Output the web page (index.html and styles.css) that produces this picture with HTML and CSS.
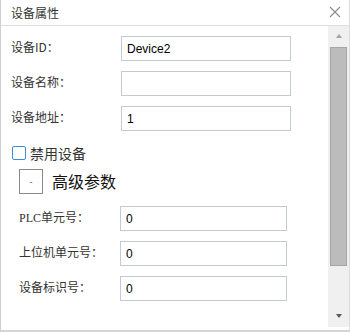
FILE: index.html
```html
<!DOCTYPE html>
<html lang="zh-CN">
<head>
	<meta charset="UTF-8">
	<title>设备属性</title>
	<link rel="stylesheet" href="styles.css">
</head>
<body>
	<div class="panel">
		<div class="title">
			<span class="title-text">设备属性</span>
			<svg class="close" width="12" height="12" viewBox="0 0 12 12">
				<path d="M1 1 L11 11 M11 1 L1 11" stroke="#8a8a8a" stroke-width="1.1" fill="none"/>
			</svg>
		</div>
		<div class="body">
			<div class="content">
				<div class="row">
					<label class="lbl">设备ID：</label>
					<input class="txt" type="text" value="Device2">
				</div>
				<div class="row">
					<label class="lbl">设备名称：</label>
					<input class="txt" type="text" value="">
				</div>
				<div class="row">
					<label class="lbl">设备地址：</label>
					<input class="txt" type="text" value="1">
				</div>
				<div class="check-row">
					<input class="chk" type="checkbox">
					<span class="chk-text">禁用设备</span>
				</div>
				<div class="adv-row">
					<button class="toggle">-</button>
					<span class="adv-text">高级参数</span>
				</div>
				<div class="sub">
					<div class="row">
						<label class="lbl sub-lbl"><span class="serif">PLC</span>单元号：</label>
						<input class="txt sub-txt" type="text" value="0">
					</div>
					<div class="row">
						<label class="lbl sub-lbl">上位机单元号：</label>
						<input class="txt sub-txt" type="text" value="0">
					</div>
					<div class="row">
						<label class="lbl sub-lbl">设备标识号：</label>
						<input class="txt sub-txt" type="text" value="0">
					</div>
				</div>
			</div>
			<div class="scroll">
				<div class="arrow-up"></div>
				<div class="thumb"></div>
				<div class="arrow-down"></div>
			</div>
		</div>
	</div>
</body>
</html>
```

FILE: styles.css
```css
*{
	padding:0;
	margin:0;
	box-sizing: border-box;
}
body{
	background: #fff;
	font-family: "Noto Sans CJK SC", "Liberation Sans", sans-serif;
	font-size: 12px;
	color: #333;
}
.panel{
	width: 350px;
	height: 332px;
	border-left: 1px solid #cfcfcf;
	border-right: 1px solid #dcdcdc;
	border-bottom: 2px solid #d4d4d4;
	display: flex;
	flex-direction: column;
}
.title{
	height: 26px;
	border-bottom: 1px solid #dedede;
	display: flex;
	align-items: center;
	justify-content: space-between;
	padding: 0 8px 0 10px;
}
.title-text{
	font-size: 12px;
	color: #333;
	line-height: 1;
}
.close{
	display: block;
	margin-top: -1px;
}
.body{
	flex: 1;
	display: flex;
	padding-bottom: 3px;
}
.content{
	flex: 1;
	padding: 10px 0 0 10px;
}
.row{
	display: flex;
	align-items: center;
	height: 25px;
	margin-bottom: 10px;
}
.lbl{
	width: 110px;
	font-size: 12px;
	color: #333;
	line-height: 1;
	margin-top: -3px;
}
.txt{
	width: 170px;
	height: 25px;
	border: 1px solid #c3cad6;
	padding: 0 5px;
	font-family: "Liberation Sans", sans-serif;
	font-size: 12px;
	color: #000;
	outline: none;
	background: #fff;
}
.check-row{
	display: flex;
	align-items: center;
	height: 24px;
	margin-top: 0;
}
.chk{
	appearance: none;
	-webkit-appearance: none;
	width: 14px;
	height: 14px;
	border: 1px solid #3b8fd9;
	border-radius: 2px;
	background: #fff;
	margin-left: 1px;
}
.chk-text{
	margin-left: 4px;
	font-size: 14px;
	color: #333;
	line-height: 1;
}
.adv-row{
	display: flex;
	align-items: center;
	margin-top: 4px;
	padding-left: 8px;
	height: 25px;
}
.toggle{
	width: 24px;
	height: 25px;
	border: 1px solid #8a8a8a;
	background: #fff;
	font-family: "Liberation Sans", sans-serif;
	font-size: 9px;
	color: #555;
}
.adv-text{
	margin-left: 9px;
	font-size: 16px;
	color: #111;
	line-height: 1;
	margin-top: -2px;
}
.sub{
	margin-top: 12px;
	padding-left: 8px;
}
.sub-lbl{
	width: 101px;
}
.sub-txt{
	width: 167px;
}
.serif{
	font-family: "Liberation Serif", serif;
}
.scroll{
	width: 21px;
	background: #f0f0f0;
	display: flex;
	flex-direction: column;
	align-items: center;
	padding-top: 8px;
}
.arrow-up{
	width: 0;
	height: 0;
	border-left: 3.5px solid transparent;
	border-right: 3.5px solid transparent;
	border-bottom: 4px solid #a3a3a3;
}
.thumb{
	margin-top: 9px;
	width: 17px;
	height: 219px;
	background: #bcbcbc;
	border: 1px solid #a6a6a6;
}
.arrow-down{
	margin-top: auto;
	margin-bottom: 9px;
	width: 0;
	height: 0;
	border-left: 3.5px solid transparent;
	border-right: 3.5px solid transparent;
	border-top: 4px solid #5a5a5a;
}
```
